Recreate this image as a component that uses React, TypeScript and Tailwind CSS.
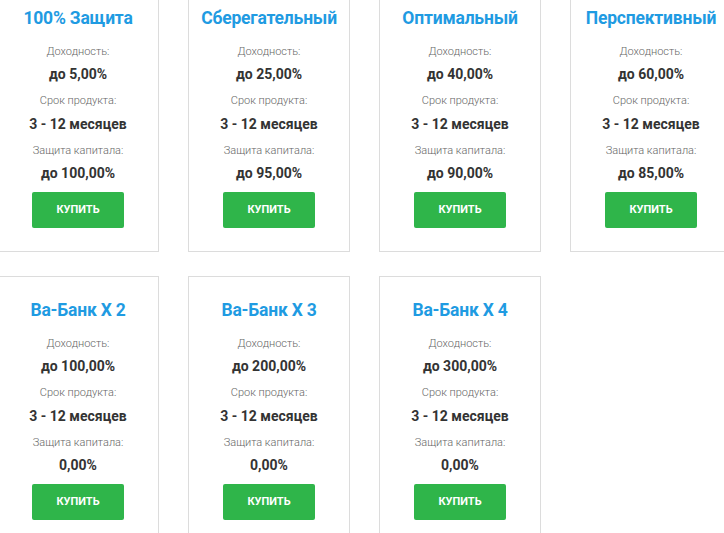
const products = [
  { title: '100% Защита', yieldValue: 'до 5,00%', protection: 'до 100,00%' },
  { title: 'Сберегательный', yieldValue: 'до 25,00%', protection: 'до 95,00%' },
  { title: 'Оптимальный', yieldValue: 'до 40,00%', protection: 'до 90,00%' },
  { title: 'Перспективный', yieldValue: 'до 60,00%', protection: 'до 85,00%' },
  { title: 'Ва-Банк X 2', yieldValue: 'до 100,00%', protection: '0,00%' },
  { title: 'Ва-Банк X 3', yieldValue: 'до 200,00%', protection: '0,00%' },
  { title: 'Ва-Банк X 4', yieldValue: 'до 300,00%', protection: '0,00%' },
];

function ProductCard({ title, yieldValue, protection }: { title: string; yieldValue: string; protection: string }) {
  return (
    <div className="flex h-[268px] flex-col items-center border border-[#dcdcdc] bg-white pt-[21px] text-center">
      <h3 className="whitespace-nowrap text-[17.5px] font-bold leading-6 tracking-[-0.2px] text-[#1f9be2]">{title}</h3>

      <p className="mt-[14px] text-[11px] font-light leading-4 text-[#666]">Доходность:</p>
      <p className="mt-[4px] text-[14px] font-bold leading-5 text-[#333]">{yieldValue}</p>

      <p className="mt-[9px] text-[11px] font-light leading-4 text-[#666]">Срок продукта:</p>
      <p className="mt-[5px] text-[14px] font-bold leading-5 text-[#333]">3 - 12 месяцев</p>

      <p className="mt-[9px] text-[11px] font-light leading-4 text-[#666]">Защита капитала:</p>
      <p className="mt-[4px] text-[14px] font-bold leading-5 text-[#333]">{protection}</p>

      <button className="mt-[9px] flex h-9 w-[92px] items-center justify-center rounded-[2px] bg-[#2fb54a] text-[11px] font-bold uppercase text-white">
        Купить
      </button>
    </div>
  );
}

export default function App() {
  return (
    <div
      className="h-[533px] w-full overflow-hidden bg-white"
      style={{ fontFamily: 'Roboto, "Noto Sans", sans-serif' }}
    >
      <div className="-ml-[3px] -mt-4 grid w-[800px] grid-cols-[repeat(4,162px)] gap-x-[29px] gap-y-6">
        {products.map((p) => (
          <ProductCard key={p.title} {...p} />
        ))}
      </div>
    </div>
  );
}
